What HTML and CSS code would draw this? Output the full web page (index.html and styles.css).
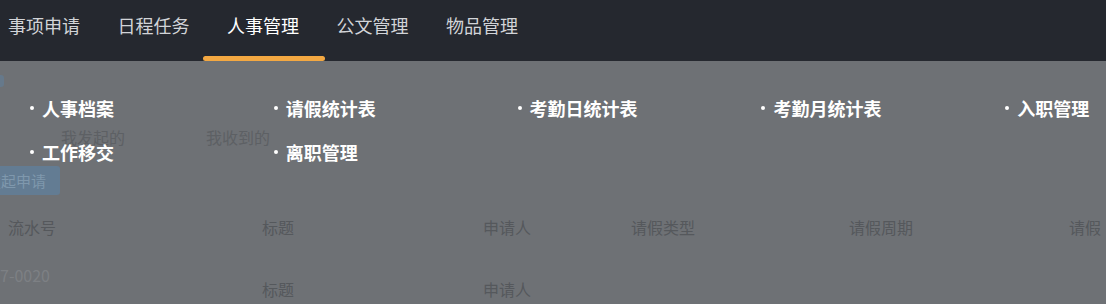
FILE: index.html
```html
<!DOCTYPE html>
<html lang="zh-CN">
<head>
  <meta charset="UTF-8" />
  <meta name="viewport" content="width=device-width, initial-scale=1.0" />
  <title>人事管理</title>
  <link rel="stylesheet" href="styles.css">
</head>
<body>

  <div class="topbar">
    <div class="nav-item">事项申请</div>
    <div class="nav-item">日程任务</div>
    <div class="nav-item active">人事管理</div>
    <div class="nav-item">公文管理</div>
    <div class="nav-item">物品管理</div>
  </div>

  <div class="main">
    <div class="page">
      <div class="crumb"></div>
      <div class="tabs">
        <span>我发起的</span>
        <span>我收到的</span>
      </div>
      <div class="btn-apply">发起申请</div>
      <div class="table-row head">
        <span>流水号</span>
        <span>标题</span>
        <span>申请人</span>
        <span>请假类型</span>
        <span>请假周期</span>
        <span>请假</span>
      </div>
      <div class="table-row body">
        <span class="serial">2020-0107-0020</span>
        <span>标题</span>
        <span>申请人</span>
        <span></span>
        <span></span>
        <span></span>
      </div>
    </div>

    <!-- dropdown of 人事管理 over the dimmed page -->
    <div class="dropdown">
      <div class="menu-link">人事档案</div>
      <div class="menu-link">请假统计表</div>
      <div class="menu-link">考勤日统计表</div>
      <div class="menu-link">考勤月统计表</div>
      <div class="menu-link">入职管理</div>
      <div class="menu-link">工作移交</div>
      <div class="menu-link">离职管理</div>
    </div>
  </div>

</body>
</html>
```

FILE: styles.css
```css
body {
  margin: 0;
  font-family: "Noto Sans CJK SC", "Noto Sans", sans-serif;
  background: #6e7175;
  width: 1106px;
  height: 304px;
  overflow: hidden;
}
.topbar {
  height: 61px;
  background: #25282f;
  display: flex;
  gap: 37.5px;
  padding-left: 8px;
  box-sizing: border-box;
}
.nav-item {
  position: relative;
  padding-top: 14px;
  font-size: 18px;
  line-height: 22px;
  color: #d2d4d8;
  white-space: nowrap;
}
.nav-item.active {
  color: #fff;
}
.nav-item.active::after {
  content: "";
  position: absolute;
  left: -24px;
  right: -26px;
  bottom: 0;
  height: 5px;
  border-radius: 3px;
  background: #f3a842;
}
.main {
  position: relative;
  height: 243px;
  overflow: hidden;
}
.page {
  padding-top: 14px;
}
.crumb {
  width: 6px;
  height: 12px;
  margin-left: -2px;
  border-radius: 0 3px 3px 0;
  background: #66798b;
}
.tabs {
  margin-top: 39px;
  display: flex;
  gap: 81px;
  padding-left: 61px;
  font-size: 16px;
  line-height: 22px;
  color: #5d6064;
}
.btn-apply {
  margin-top: 18px;
  width: 88px;
  height: 29px;
  margin-left: -28px;
  padding-left: 0;
  box-sizing: border-box;
  border-radius: 3px;
  background: #637c93;
  color: #7f98ad;
  font-size: 15px;
  line-height: 29px;
  text-align: center;
}
.table-row {
  display: grid;
  grid-template-columns: 254px 221px 148px 218px 220px 60px;
  padding-left: 8px;
  font-size: 16px;
  line-height: 22px;
  white-space: nowrap;
}
.table-row.head {
  margin-top: 21px;
  color: #55585c;
}
.table-row.body {
  margin-top: 26px;
  color: #55585c;
}
.table-row.body span {
  padding-top: 14px;
}
.table-row.body .serial {
  padding-top: 0;
  direction: rtl;
  overflow: hidden;
  margin-left: -8px;
  width: 50px;
  color: #7d8084;
}
.dropdown {
  position: absolute;
  top: 0;
  left: 0;
  right: 0;
  bottom: 0;
  padding: 36px 0 0 26px;
  display: grid;
  grid-template-columns: repeat(5, 243.8px);
  grid-auto-rows: 22px;
  row-gap: 22px;
}
.menu-link {
  display: flex;
  align-items: center;
  gap: 8px;
  color: #fff;
  font-size: 18px;
  font-weight: bold;
  line-height: 22px;
  white-space: nowrap;
}
.menu-link::before {
  content: "";
  width: 4px;
  height: 4px;
  margin-left: 4px;
  border-radius: 50%;
  background: #fff;
}
```
